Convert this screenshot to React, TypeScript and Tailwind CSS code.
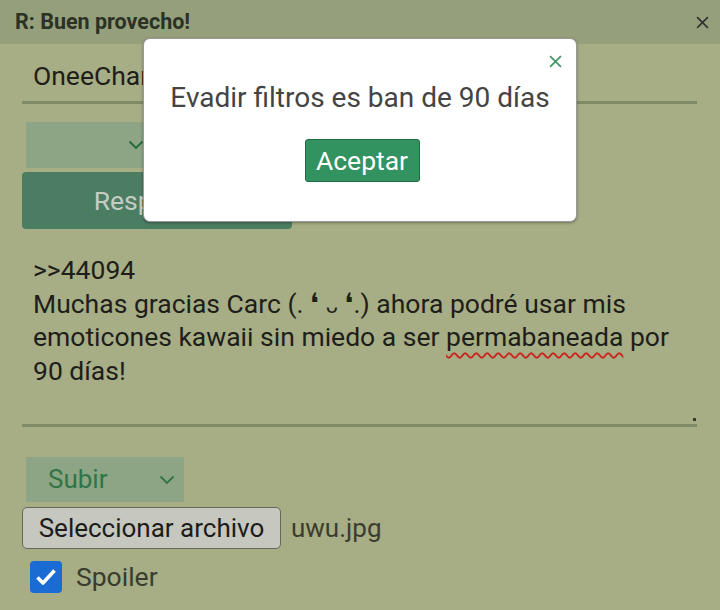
import React from 'react';

function Chevron({ className }: { className?: string }) {
  return (
    <svg width="16" height="10" viewBox="0 0 16 10" className={className}>
      <polyline points="1.5,1.5 8,8 14.5,1.5" fill="none" stroke="currentColor" strokeWidth="1.8" />
    </svg>
  );
}

function Cross({ size, className }: { size: number; className?: string }) {
  return (
    <svg width={size} height={size} viewBox="0 0 12 12" className={className}>
      <line x1="1" y1="1" x2="11" y2="11" stroke="currentColor" strokeWidth="1.5" />
      <line x1="11" y1="1" x2="1" y2="11" stroke="currentColor" strokeWidth="1.5" />
    </svg>
  );
}

export default function App() {
  return (
    <div className="relative w-[720px] h-[610px] overflow-hidden bg-[#a7ad85] font-['Roboto',sans-serif]">
      <div className="h-[44px] bg-[#959f7c] flex items-center justify-between pl-[15px] pr-[11px]">
        <span className="text-[21.5px] font-bold text-[#2b3223]">R: Buen provecho!</span>
        <Cross size={13} className="text-[#333]" />
      </div>

      <div className="px-[22px]">
        <div className="w-[675px] h-[60px] border-b-[3px] border-[#7f8b67] flex items-center pl-[11px] pt-[6px]">
          <span className="text-[26.5px] text-[#1e1e1a]">OneeChan</span>
        </div>

        <div className="mt-[18px] ml-[4px] w-[128px] h-[46px] bg-[#8da584] flex items-center justify-end pr-[10px]">
          <Chevron className="text-[#1f6b3e]" />
        </div>

        <div className="mt-[4px] w-[270px] h-[57px] bg-[#4b7d62] rounded-[4px] flex items-center justify-center">
          <span className="text-[26.5px] text-[#c5cdc2]">Responder</span>
        </div>

        <div className="relative mt-[7px] w-[675px] h-[191px] border-b-[3px] border-[#7f8b67] pl-[11px] pt-[17px] text-[26.5px] leading-[33.5px] text-[#1e1e1a] whitespace-nowrap">
          <div>&gt;&gt;44094</div>
          <div className="h-[33.5px]">
            Muchas gracias Carc (.{' '}
            <span className="font-['DejaVu_Sans'] text-[28px]">❛</span>{' '}
            <span className="font-['DejaVu_Sans'] text-[20px]">ᴗ</span>{' '}
            <span className="font-['DejaVu_Sans'] text-[28px]">❛</span>.) ahora podré usar mis
          </div>
          <div>
            emoticones kawaii sin miedo a ser{' '}
            <span className="underline decoration-wavy decoration-[#c8261e] decoration-[2px] underline-offset-[6px]">permabaneada</span>{' '}
            por
          </div>
          <div>90 días!</div>
          <div className="absolute right-[1px] bottom-[3px] w-[3px] h-[3px] bg-[#3a3a30]" />
        </div>

        <div className="mt-[30px] ml-[4px] w-[158px] h-[45px] bg-[#8da584] flex items-center justify-between pl-[22px] pr-[9px]">
          <span className="text-[26px] text-[#2f7547]">Subir</span>
          <Chevron className="text-[#2f7547]" />
        </div>

        <div className="mt-[5px] flex items-center">
          <div className="w-[259px] h-[42px] border-[1.5px] border-[#676760] rounded-[5px] bg-[#c6c7bf] flex items-center justify-center">
            <span className="text-[26px] text-[#1c1c1a]">Seleccionar archivo</span>
          </div>
          <span className="ml-[10px] text-[26px] text-[#3b3e2f]">uwu.jpg</span>
        </div>

        <div className="mt-[8px] flex items-center">
          <div className="ml-[8px] w-[32px] h-[32px] rounded-[4px] bg-[#1a6cd4] flex items-center justify-center">
            <svg width="22" height="18" viewBox="0 0 22 18">
              <polyline points="2.5,9.5 8,15 19.5,2.5" fill="none" stroke="white" strokeWidth="3.6" strokeLinejoin="round" />
            </svg>
          </div>
          <span className="ml-[14px] text-[26.5px] text-[#393c2e]">Spoiler</span>
        </div>
      </div>

      <div className="absolute left-[143px] top-[38px] w-[434px] h-[184px] bg-white rounded-[7px] border border-[#9a9a9a] shadow-[0_1px_3px_rgba(0,0,0,0.35)]">
        <div className="absolute right-[14px] top-[16px]">
          <Cross size={13} className="text-[#3d9464]" />
        </div>
        <div className="pt-[42px] text-center text-[28px] leading-[34px] text-[#444]">Evadir filtros es ban de 90 días</div>
        <div className="mt-[24px] flex justify-center pl-[4px]">
          <div className="w-[115px] h-[43px] bg-[#329260] border border-[#1f6b42] rounded-[3px] flex items-center justify-center">
            <span className="text-[26.5px] text-white">Aceptar</span>
          </div>
        </div>
      </div>
    </div>
  );
}
